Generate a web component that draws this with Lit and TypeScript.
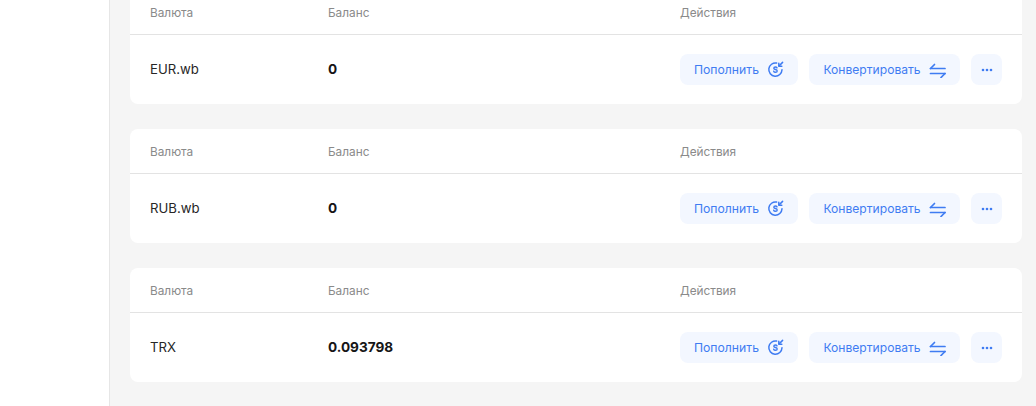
import { LitElement, css, html } from 'lit'
import { customElement } from 'lit/decorators.js'

const wallets = [
  { name: 'EUR.wb', balance: '0' },
  { name: 'RUB.wb', balance: '0' },
  { name: 'TRX', balance: '0.093798' },
]

const depositIcon = html`<svg class="icon" width="17" height="17" viewBox="0 0 17 17" fill="none" stroke="currentColor" stroke-width="1.5" stroke-linecap="round" stroke-linejoin="round">
  <path d="M9.6 2.1A6.6 6.6 0 1 0 15 8.8"/>
  <path d="M15.6 1.4 12.2 4.8"/>
  <path d="M11.8 2.2V5.2H14.8"/>
  <path d="M10 6.9C9.7 6.3 9.2 6 8.4 6 7.5 6 6.8 6.5 6.8 7.3 6.8 8.9 10.2 8.1 10.2 9.9 10.2 10.8 9.4 11.3 8.5 11.3 7.6 11.3 6.9 10.9 6.7 10.2" stroke-width="1.4"/>
</svg>`

const convertIcon = html`<svg class="icon" width="17" height="16" viewBox="0 0 17 16" fill="none" stroke="currentColor" stroke-width="1.7" stroke-linecap="round" stroke-linejoin="round">
  <path d="M1.5 6.5H16"/>
  <path d="M1.5 6.5 5.5 2.5"/>
  <path d="M1.5 11.5H16"/>
  <path d="M16 11.5 12 15.5"/>
</svg>`

@customElement('app-root')
export class AppRoot extends LitElement {
  static styles = css`
    :host {
      display: block;
      height: 406px;
      overflow: hidden;
      background: #f5f5f5;
      font-family: Inter, 'Liberation Sans', sans-serif;
    }
    .layout {
      display: flex;
      height: 100%;
    }
    .sidebar {
      width: 109px;
      flex: none;
      background: #fff;
      border-right: 1px solid #e6e6e6;
    }
    .main {
      flex: 1;
      min-width: 0;
      display: flex;
      flex-direction: column;
      gap: 25px;
      padding: 0 14px 0 20px;
      margin-top: -10px;
    }
    .card {
      background: #fff;
      border-radius: 8px;
      height: 114px;
      flex: none;
    }
    .head,
    .row {
      display: grid;
      grid-template-columns: 178px 352px 1fr;
      padding: 0 20px;
      align-items: center;
    }
    .head {
      box-sizing: border-box;
      height: 45px;
      padding-top: 1px;
      border-bottom: 1px solid #e3e3e3;
      font-size: 11.8px;
      color: #8a8a8a;
    }
    .row {
      height: 69px;
      font-size: 13.2px;
      color: #262626;
    }
    .name,
    .balance {
      margin-bottom: 2px;
    }
    .balance {
      font-size: 13.6px;
      font-weight: 700;
      color: #161616;
    }
    .actions {
      display: flex;
      gap: 11.5px;
    }
    .btn {
      display: flex;
      align-items: center;
      gap: 8px;
      height: 31px;
      padding: 0 14px;
      border: 0;
      border-radius: 8px;
      background: #f3f7ff;
      color: #3f7cf2;
      font: inherit;
      font-size: 12.2px;
      white-space: nowrap;
    }
    .btn.wide {
      font-size: 12.1px;
    }
    .btn.more {
      width: 31px;
      padding: 0;
      justify-content: center;
    }
    .icon {
      display: block;
      flex: none;
    }
  `

  render() {
    return html`
      <div class="layout">
        <aside class="sidebar"></aside>
        <main class="main">
          ${wallets.map(
            (w) => html`
              <section class="card">
                <div class="head">
                  <span>Валюта</span>
                  <span>Баланс</span>
                  <span>Действия</span>
                </div>
                <div class="row">
                  <span class="name">${w.name}</span>
                  <span class="balance">${w.balance}</span>
                  <div class="actions">
                    <button class="btn">Пополнить ${depositIcon}</button>
                    <button class="btn wide">Конвертировать ${convertIcon}</button>
                    <button class="btn more">
                      <svg width="12" height="4" viewBox="0 0 12 4" fill="currentColor">
                        <circle cx="2" cy="2" r="1.3" />
                        <circle cx="6" cy="2" r="1.3" />
                        <circle cx="10" cy="2" r="1.3" />
                      </svg>
                    </button>
                  </div>
                </div>
              </section>
            `,
          )}
        </main>
      </div>
    `
  }
}
